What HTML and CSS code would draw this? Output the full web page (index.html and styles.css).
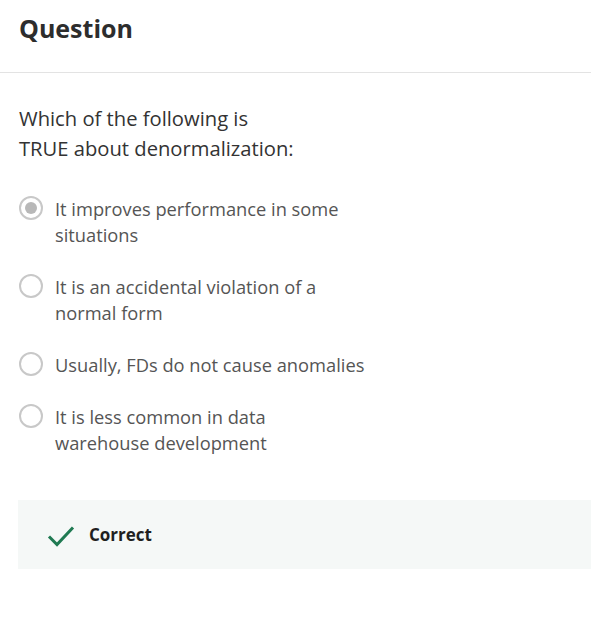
FILE: index.html
```html
<!DOCTYPE html>
<html>
<head>
<meta charset="utf-8">
<link rel="stylesheet" href="styles.css">
</head>
<body>
<header class="header">
  <h1 class="title">Question</h1>
</header>
<main class="content">
  <p class="prompt">Which of the following is<br>TRUE about denormalization:</p>
  <ul class="options">
    <li class="option">
      <span class="radio radio-checked"><span class="dot"></span></span>
      <span class="label">It improves performance in some<br>situations</span>
    </li>
    <li class="option">
      <span class="radio"></span>
      <span class="label">It is an accidental violation of a<br>normal form</span>
    </li>
    <li class="option">
      <span class="radio"></span>
      <span class="label">Usually, FDs do not cause anomalies</span>
    </li>
    <li class="option">
      <span class="radio"></span>
      <span class="label">It is less common in data<br>warehouse development</span>
    </li>
  </ul>
  <div class="feedback">
    <svg class="check" width="28" height="22" viewBox="0 0 28 22"><path d="M2 11.5 L10 19.5 L26 2.5" fill="none" stroke="#1f7a52" stroke-width="3"/></svg>
    <span class="feedback-text">Correct</span>
  </div>
</main>
</body>
</html>
```
FILE: styles.css
```css
* { box-sizing: border-box; }
html, body { margin: 0; padding: 0; background: #fff; }
body {
  font-family: "Open Sans", "Noto Sans", sans-serif;
  color: #333;
  width: 591px;
  overflow: hidden;
}
.header {
  height: 73px;
  border-bottom: 1px solid #e3e3e3;
  padding: 12px 19px 0;
}
.title {
  margin: 0;
  font-size: 25px;
  line-height: 32px;
  font-weight: 700;
  color: #2d2d2d;
}
.content {
  padding: 30px 0 0 18px;
}
.prompt {
  margin: 0 0 33px 1px;
  font-size: 20.2px;
  line-height: 30px;
  color: #333;
}
.options {
  list-style: none;
  margin: 0;
  padding: 0;
  display: flex;
  flex-direction: column;
  gap: 26px;
}
.option {
  display: flex;
  align-items: flex-start;
  gap: 12px;
  padding-left: 1px;
}
.radio {
  flex: none;
  width: 24px;
  height: 24px;
  border-radius: 50%;
  border: 2px solid #c8c8c8;
  margin-top: 0;
  display: flex;
  align-items: center;
  justify-content: center;
}
.dot {
  width: 12px;
  height: 12px;
  border-radius: 50%;
  background: #b8b8b8;
}
.label {
  font-size: 18.3px;
  line-height: 26px;
  color: #555;
}
.feedback {
  margin-top: 44px;
  height: 69px;
  background: #f5f8f7;
  display: flex;
  align-items: center;
  padding-left: 29px;
  gap: 14px;
}
.check { flex: none; margin-top: 2px; }
.feedback-text {
  font-size: 17px;
  font-weight: 700;
  color: #1f1f1f;
}
```
